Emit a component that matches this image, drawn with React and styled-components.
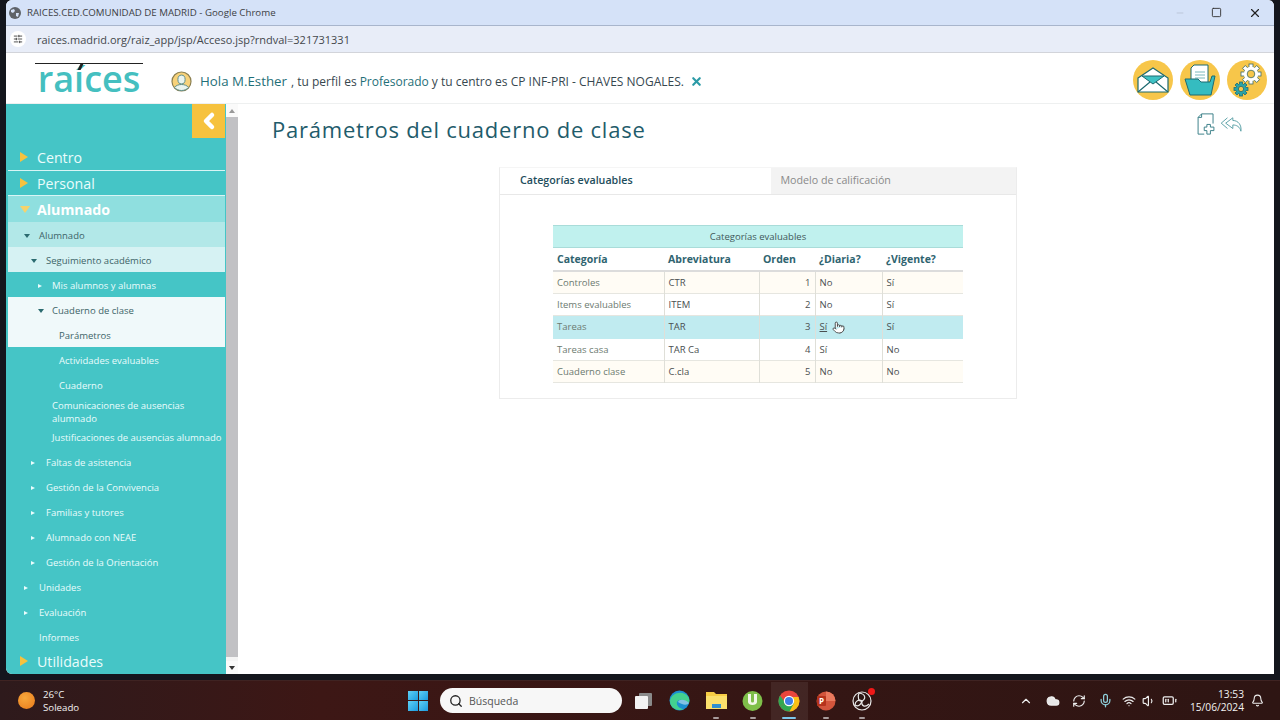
import React from "react";
import styled, { createGlobalStyle } from "styled-components";
import { Minus, Square, X, SlidersHorizontal, ChevronLeft, ChevronUp, Search, Pointer, Mic, Wifi, Volume1, BatteryMedium, Bell, Cloud, RefreshCw } from "lucide-react";

const GlobalStyle = createGlobalStyle`
    html, body {
        margin: 0;
        padding: 0;
        background: #14161d;
        overflow: hidden;
    }
    * { box-sizing: border-box; }
    body { font-family: "Open Sans", "Liberation Sans", sans-serif; }
`;

const Screen = styled.div`
    width: 1280px;
    height: 720px;
    display: flex;
    flex-direction: column;
    background: #14161d;
`;

const Browser = styled.div`
    width: 1268px;
    height: 674px;
    margin: 0 6px;
    display: flex;
    flex-direction: column;
    background: #fff;
    border-radius: 6px 6px 0 6px;
    overflow: hidden;
`;

const TitleBar = styled.div`
    height: 26px;
    flex: none;
    display: flex;
    align-items: center;
    padding: 0 12px 0 3px;
    background: #d5e2f8;
    border-bottom: 1px solid #a8b5cc;
    font-size: 9.7px;
    color: #3c4043;
`;

const Globe = styled.span`
    width: 12px;
    height: 12px;
    margin-right: 6px;
    display: flex;
`;

const WindowButtons = styled.div`
    margin-left: auto;
    display: flex;
    align-items: center;
    gap: 26px;
`;

const AddressBar = styled.div`
    height: 27px;
    flex: none;
    display: flex;
    align-items: center;
    padding-left: 4px;
    background: #e8edf8;
    border-bottom: 1px solid #d2d4da;
    font-size: 11px;
    color: #44484c;
`;

const SiteIcon = styled.span`
    width: 16px;
    height: 16px;
    margin-right: 11px;
    display: flex;
    align-items: center;
    justify-content: center;
    border-radius: 50%;
    background: #fff;
`;

const Header = styled.header`
    height: 51px;
    flex: none;
    display: flex;
    align-items: center;
    padding: 4px 7px 0 29px;
    border-bottom: 1px solid #eef0f0;
`;

const Logo = styled.div`
    position: relative;
    width: 108px;
    height: 32px;
    margin-top: -2px;
    border-top: 1px solid #222;
    color: #45bfc0;
    font-size: 36px;
    font-weight: 600;
    line-height: 30px;
    letter-spacing: 0;
    text-align: center;

    &::after {
        content: "";
        position: absolute;
        left: 44px;
        top: 0;
        width: 3px;
        height: 6px;
        background: #222;
        transform: skewX(-25deg);
    }
`;

const Greeting = styled.div`
    margin-left: 28px;
    padding-top: 2px;
    display: flex;
    align-items: center;
    font-size: 12px;
    color: #37474f;
`;

const GreetName = styled.span`
    margin: 0 4px 0 8px;
    font-size: 13.3px;
    color: #1f6f78;
`;

const ProfileLink = styled.span`
    margin: 0 3px;
    color: #1f6f78;
`;

const HeaderIcons = styled.div`
    margin-left: auto;
    display: flex;
    gap: 7px;
`;

const GoldCircle = styled.span`
    width: 40px;
    height: 40px;
    display: flex;
    align-items: center;
    justify-content: center;
    border-radius: 50%;
    background: #f7c64a;
`;

const Body = styled.div`
    flex: 1;
    min-height: 0;
    display: flex;
`;

const Sidebar = styled.nav`
    width: 220px;
    flex: none;
    padding: 0 1px 0 2px;
    background: #45c5c6;
`;

const CollapseBar = styled.div`
    height: 42px;
    display: flex;
    justify-content: flex-end;
    align-items: flex-start;
`;

const CollapseButton = styled.div`
    width: 33px;
    height: 34px;
    display: flex;
    align-items: center;
    justify-content: center;
    background: #f6c23e;
`;

const tones = {
    base: { bg: "transparent", color: "#eafcfc" },
    alumnado: { bg: "#8fdfdf", color: "#fff" },
    sub1: { bg: "#b2e8e8", color: "#3d6468" },
    sub2: { bg: "#d6f2f3", color: "#3d6468" },
    sub3: { bg: "#f0f9fa", color: "#3d6468" },
};

const MenuRow = styled.div`
    height: ${props => props.$height || 25}px;
    display: flex;
    align-items: center;
    padding-top: 2px;
    padding-left: ${props => props.$indent}px;
    background: ${props => tones[props.$tone || "base"].bg};
    color: ${props => tones[props.$tone || "base"].color};
    font-size: 9.5px;
    line-height: 13px;
`;

const TopRow = styled(MenuRow)`
    padding-top: 0;
    padding-bottom: ${props => props.$lift || 0}px;
    font-size: 14.2px;
    font-weight: ${props => props.$bold ? 700 : 400};
    border-bottom: ${props => props.$line ? "1px solid #d8f5f5" : "none"};
`;

const CaretSlot = styled.span`
    width: ${props => props.$width}px;
    flex: none;
    display: flex;
    align-items: center;
`;

const Caret = styled.span`
    width: 0;
    height: 0;
    ${props => props.$open ? `
        border-left: ${props.$size}px solid transparent;
        border-right: ${props.$size}px solid transparent;
        border-top: ${props.$size * 1.5}px solid ${props.$color};
    ` : `
        border-top: ${props.$size}px solid transparent;
        border-bottom: ${props.$size}px solid transparent;
        border-left: ${props.$size * 1.7}px solid ${props.$color};
    `}
`;

const Scrollbar = styled.div`
    width: 12px;
    flex: none;
    display: flex;
    flex-direction: column;
    background: #f4f4f4;
`;

const ScrollArrow = styled.div`
    height: 13px;
    flex: none;
    display: flex;
    align-items: center;
    justify-content: center;
    background: #fafafa;
`;

const ScrollThumb = styled.div`
    flex: 1;
    margin: 0 0 4px;
    background: #c1c1c4;
`;

const Main = styled.main`
    flex: 1;
    min-width: 0;
    padding: 8px 30px 0 34px;
`;

const TitleRow = styled.div`
    height: 55px;
    display: flex;
    justify-content: space-between;
    align-items: flex-start;
`;

const PageTitle = styled.h1`
    margin: 2px 0 0;
    font-size: 22px;
    line-height: 30px;
    font-weight: 400;
    letter-spacing: 0.77px;
    color: #1f5c6b;
`;

const TitleIcons = styled.div`
    display: flex;
    align-items: center;
    gap: 4px;
    margin-top: 1px;
`;

const Panel = styled.section`
    width: 518px;
    height: 232px;
    margin-left: 227px;
    border: 1px solid #ececec;
    border-top-color: #f5f5f5;
`;

const Tabs = styled.div`
    height: 27px;
    display: flex;
    border-bottom: 1px solid #e8e8e8;
`;

const Tab = styled.div`
    width: ${props => props.$active ? 272 : 245}px;
    padding: 0 0 2px ${props => props.$active ? 20 : 9}px;
    display: flex;
    align-items: center;
    font-size: 10.7px;
    font-weight: ${props => props.$active ? 600 : 400};
    color: ${props => props.$active ? "#1e4d5c" : "#8a8a8a"};
    background: ${props => props.$active ? "#fff" : "#f3f3f3"};
`;

const Table = styled.table`
    width: 410px;
    margin: 30px 0 0 53px;
    border-collapse: collapse;
    table-layout: fixed;
    font-size: 9.5px;
    color: #4a4f50;
`;

const Caption = styled.caption`
    height: 23px;
    line-height: 22px;
    background: #c0f1ee;
    border-top: 1px solid #a9dcd9;
    border-bottom: 1px solid #a9dcd9;
    font-size: 9.5px;
    color: #41585a;
`;

const HeadCell = styled.th`
    height: 23px;
    padding: 0 4px;
    text-align: left;
    font-size: 10.5px;
    font-weight: 700;
    color: #2f6470;
    border-bottom: 2px solid #dcdcdc;
`;

const Row = styled.tr`
    height: 22.4px;
    background: ${props => props.$selected ? "#c0ebf0" : props.$odd ? "#fffcf5" : "#fff"};
    border-bottom: 1px solid ${props => props.$selected ? "#c0ebf0" : "#e6e6e0"};
`;

const Cell = styled.td`
    position: relative;
    padding: 0 4px;
    text-align: ${props => props.$right ? "right" : "left"};
    color: ${props => props.$name ? "#6c7a70" : "#4a4f50"};
    border-left: ${props => props.$first ? "none" : "1px solid #dfdfd8"};
`;

const HandCursor = styled.span`
    position: absolute;
    left: 16px;
    top: 5px;
    display: flex;
`;

const Taskbar = styled.footer`
    height: 40px;
    margin-top: 6px;
    flex: none;
    display: flex;
    align-items: center;
    padding-left: 18px;
    background: linear-gradient(90deg, #2e1a1c 0%, #3d1715 25%, #351614 60%, #2e1513 100%);
    border-top: 1px solid #3f2322;
`;

const Weather = styled.div`
    width: 390px;
    display: flex;
    align-items: center;
    gap: 8px;
    color: #f2f2f2;
    font-size: 9.7px;
    line-height: 13px;
`;

const Sun = styled.span`
    width: 17px;
    height: 17px;
    border-radius: 50%;
    background: radial-gradient(circle at 40% 35%, #f8a83c, #e8791a);
`;

const WinLogo = styled.span`
    width: 20px;
    height: 20px;
    display: grid;
    grid-template-columns: 1fr 1fr;
    gap: 1px;
`;

const WinPane = styled.span`
    background: linear-gradient(135deg, #5fd0f5, #1c9bdf);
`;

const SearchBox = styled.div`
    width: 182px;
    height: 25px;
    margin-left: 12px;
    display: flex;
    align-items: center;
    gap: 6px;
    padding-left: 9px;
    border-radius: 13px;
    background: #f7f7f7;
    color: #555;
    font-size: 10.5px;
`;

const TaskIcons = styled.div`
    margin-left: 3px;
    display: flex;
`;

const TaskIcon = styled.span`
    position: relative;
    width: 36.5px;
    height: 38px;
    display: flex;
    align-items: center;
    justify-content: center;
    background: ${props => props.$active ? "rgba(255,255,255,0.07)" : "transparent"};
`;

const RunningMark = styled.span`
    position: absolute;
    bottom: 1px;
    left: 50%;
    width: ${props => props.$active ? 14 : 6}px;
    height: 2px;
    margin-left: ${props => props.$active ? -7 : -3}px;
    border-radius: 1px;
    background: ${props => props.$active ? "#7cc6ec" : "#a89c9c"};
`;

const RecDot = styled.span`
    position: absolute;
    top: 6px;
    right: 6px;
    width: 7px;
    height: 7px;
    border-radius: 50%;
    background: #f01818;
`;

const Tray = styled.div`
    margin-left: auto;
    display: flex;
    align-items: center;
    padding-right: 16px;
    color: #eee;
`;

const TrayIcon = styled.span`
    width: ${props => props.$width || 26.5}px;
    display: flex;
    justify-content: center;
`;

const Clock = styled.div`
    margin: 0 7px 0 9px;
    text-align: right;
    font-size: 10.2px;
    line-height: 13px;
    color: #f2f2f2;
`;

const MenuLabel = styled.span`
    white-space: ${props => props.$wrap ? "normal" : "nowrap"};
    width: ${props => props.$wrap ? "150px" : "auto"};
`;

const menu = [
    { label: "Alumnado", indent: 16, slot: 15, tone: "sub1", open: true, dark: true },
    { label: "Seguimiento académico", indent: 23, slot: 15, tone: "sub2", open: true, dark: true },
    { label: "Mis alumnos y alumnas", indent: 30, slot: 14, caret: true },
    { label: "Cuaderno de clase", indent: 30, slot: 14, tone: "sub3", open: true, dark: true },
    { label: "Parámetros", indent: 51, tone: "sub3" },
    { label: "Actividades evaluables", indent: 51 },
    { label: "Cuaderno", indent: 51 },
    { label: "Comunicaciones de ausencias alumnado", indent: 44, height: 27, wrap: true },
    { label: "Justificaciones de ausencias alumnado", indent: 44 },
    { label: "Faltas de asistencia", indent: 23, slot: 15, caret: true },
    { label: "Gestión de la Convivencia", indent: 23, slot: 15, caret: true },
    { label: "Familias y tutores", indent: 23, slot: 15, caret: true },
    { label: "Alumnado con NEAE", indent: 23, slot: 15, caret: true },
    { label: "Gestión de la Orientación", indent: 23, slot: 15, caret: true },
    { label: "Unidades", indent: 16, slot: 15, caret: true },
    { label: "Evaluación", indent: 16, slot: 15, caret: true },
    { label: "Informes", indent: 31 },
];

const categories = [
    ["Controles", "CTR", 1, "No", "Sí"],
    ["Items evaluables", "ITEM", 2, "No", "Sí"],
    ["Tareas", "TAR", 3, "Sí", "Sí"],
    ["Tareas casa", "TAR Ca", 4, "Sí", "No"],
    ["Cuaderno clase", "C.cla", 5, "No", "No"],
];

function GlobeIcon() {
    return (
        <svg width="12" height="12" viewBox="0 0 12 12">
            <circle cx="6" cy="6" r="6" fill="#5f6368" />
            <path d="M2 3 L5 2 L6 4 L4 6 L2 5 Z M7 6 L10 6 L9 10 L7 9 Z" fill="#d5e2f8" />
        </svg>
    );
}

function MailIcon() {
    return (
        <svg width="34" height="28" viewBox="0 0 34 28">
            <path d="M2 12 L17 2 L32 12 V26 H2 Z" fill="#fff" stroke="#1d6a70" strokeWidth="1.2" />
            <path d="M6 10 H28 L17 18 Z" fill="#3ec2c4" stroke="#1d6a70" strokeWidth="1" />
            <path d="M2 26 L14 16 M32 26 L20 16" stroke="#1d6a70" strokeWidth="1.2" />
        </svg>
    );
}

function FolderIcon() {
    return (
        <svg width="34" height="34" viewBox="0 0 34 34">
            <path d="M11 2 H25 V24 H8 V5 Z" fill="#fff" stroke="#1d6a70" strokeWidth="1" />
            <path d="M12 9 H22 M12 12 H22 M12 15 H22" stroke="#7ab8bc" strokeWidth="1" />
            <path d="M2 16 H15 L18 19 H27 L29 13 H32 L28 32 H7 Z" fill="#35bcc0" stroke="#1d6a70" strokeWidth="1" />
        </svg>
    );
}

function Gear({ size, fill, color, edge, cx, cy }) {
    const angles = [0, 45, 90, 135];
    return (
        <g>
            {angles.map(a => (
                <rect key={a} x={cx - size * 0.2} y={cy - size} width={size * 0.4} height={size * 2} fill={color} stroke={edge} strokeWidth="0.8" transform={`rotate(${a} ${cx} ${cy})`} />
            ))}
            <circle cx={cx} cy={cy} r={size * 0.72} fill={color} />
            <circle cx={cx} cy={cy} r={size * 0.38} fill={fill} stroke={edge} strokeWidth="0.8" />
        </g>
    );
}

function GearsIcon() {
    return (
        <svg width="36" height="36" viewBox="0 0 36 36">
            <Gear size={10} cx={22} cy={12} color="#fff" edge="#3c6a66" fill="#f7c64a" />
            <Gear size={7} cx={12} cy={27} color="#2aa3a8" edge="#1d6a70" fill="#f7c64a" />
        </svg>
    );
}

function NewDocIcon() {
    return (
        <svg width="18" height="22" viewBox="0 0 20 25" fill="none" stroke="#3a8088" strokeWidth="1.1">
            <path d="M5 1 H18 V12 M8 24 H1 V5 L5 1 V5 H1" />
            <path d="M11 13 H15 V16 H19 V20 H15 V24 H11 V20 H8 V16 H11 Z" />
        </svg>
    );
}

function BackIcon() {
    return (
        <svg width="25" height="17" viewBox="0 0 25 19" fill="none" stroke="#4f9aa0" strokeWidth="1">
            <path d="M8 2 L1 8 L8 14" />
            <path d="M14 2 L6 8 L14 14 V10 C18 10 22 12 23 17 C24 10 20 5 14 5 Z" />
        </svg>
    );
}

function EdgeIcon() {
    return (
        <svg width="21" height="21" viewBox="0 0 21 21">
            <circle cx="10.5" cy="10.5" r="10" fill="#1b8fd0" />
            <path d="M1 11 C2 4 10 1 16 4 C20 6 21 10 20 13 C17 10 10 8 8 12 C7 16 11 19 15 19 C8 22 1 18 1 11 Z" fill="#43d18f" />
            <path d="M9 12 C10 9 16 9 20 13 C19 15 15 15 13 14 C11 13 10 13 9 12 Z" fill="#e7f7f7" opacity="0.5" />
        </svg>
    );
}

function ExplorerIcon() {
    return (
        <svg width="21" height="19" viewBox="0 0 21 19">
            <path d="M0 1 H8 L10 3 H21 V18 H0 Z" fill="#f7cd45" />
            <path d="M0 5 H21 V18 H0 Z" fill="#fbe06c" />
            <rect x="6" y="13" width="9" height="4" fill="#2f8fd0" />
        </svg>
    );
}

function TorrentIcon() {
    return (
        <svg width="21" height="23" viewBox="0 0 21 23">
            <circle cx="10.5" cy="12" r="10" fill="#7fbf4a" />
            <path d="M6 5 V13 C6 17 15 17 15 13 V5 H12 V12 C12 14 9 14 9 12 V5 Z" fill="#f2f7ea" />
        </svg>
    );
}

function ChromeIcon() {
    return (
        <svg width="22" height="22" viewBox="0 0 22 22">
            <circle cx="11" cy="11" r="10.5" fill="#e8453c" />
            <path d="M11 11 L1.9 16.2 A10.5 10.5 0 0 1 2 5.5 L6 11 Z" fill="#31a853" />
            <path d="M1.9 16.2 A10.5 10.5 0 0 0 14 21 L19 11 H11 Z" fill="#31a853" />
            <path d="M21.5 11 A10.5 10.5 0 0 1 11.5 21.5 L16 13 L15 7 H20.5 Z" fill="#fbc116" />
            <circle cx="11" cy="11" r="5.2" fill="#fff" />
            <circle cx="11" cy="11" r="4" fill="#3f7fe8" />
        </svg>
    );
}

function PowerPointIcon() {
    return (
        <svg width="20" height="20" viewBox="0 0 20 20">
            <circle cx="10" cy="10" r="9.5" fill="#d3553c" />
            <path d="M10 .5 A9.5 9.5 0 0 1 19.5 10 H10 Z" fill="#ea7a5e" />
            <rect x="1" y="5" width="9" height="10" rx="1" fill="#b5331c" />
            <text x="3" y="13" fontSize="8" fontWeight="700" fill="#fff" fontFamily="Open Sans">P</text>
        </svg>
    );
}

function ObsIcon() {
    return (
        <svg width="20" height="20" viewBox="0 0 20 20" fill="none" stroke="#e8e8e8" strokeWidth="1.2">
            <circle cx="10" cy="10" r="9" fill="#2c1614" />
            <path d="M7 2 C14 3 14 8 10 10 C7 11 5 7 7 2 Z" />
            <path d="M17 13 C13 17 9 15 10 10" />
            <path d="M3 14 C3 10 7 8 10 10 C9 14 6 16 3 14 Z" />
        </svg>
    );
}

export default function App() {
    return (
        <Screen>
            <GlobalStyle />
            <Browser>
                <TitleBar>
                    <Globe><GlobeIcon /></Globe>
                    RAICES.CED.COMUNIDAD DE MADRID - Google Chrome
                    <WindowButtons>
                        <Minus size={10} color="#b8c2d4" />
                        <Square size={11} color="#333" />
                        <X size={14} color="#222" />
                    </WindowButtons>
                </TitleBar>
                <AddressBar>
                    <SiteIcon><SlidersHorizontal size={10} color="#333" /></SiteIcon>
                    raices.madrid.org/raiz_app/jsp/Acceso.jsp?rndval=321731331
                </AddressBar>
                <Header>
                    <Logo>raíces</Logo>
                    <Greeting>
                        <svg width="21" height="21" viewBox="0 0 21 21">
                            <circle cx="10.5" cy="10.5" r="9.5" fill="#f7d27a" stroke="#8c8052" strokeWidth="1.2" />
                            <ellipse cx="10.5" cy="8.5" rx="3.6" ry="4.4" fill="#eaf4ef" stroke="#5e8f8c" />
                            <path d="M3.5 16.5 C6 12.5 15 12.5 17.5 16.5 C14 20.5 7 20.5 3.5 16.5 Z" fill="#eaf4ef" stroke="#5e8f8c" />
                        </svg>
                        <GreetName>Hola M.Esther</GreetName>
                        , tu perfil es
                        <ProfileLink>Profesorado</ProfileLink>
                        y tu centro es CP INF-PRI - CHAVES NOGALES.
                        <X size={13} strokeWidth={4} color="#2b9aa6" style={{ marginLeft: 6 }} />
                    </Greeting>
                    <HeaderIcons>
                        <GoldCircle><MailIcon /></GoldCircle>
                        <GoldCircle><FolderIcon /></GoldCircle>
                        <GoldCircle><GearsIcon /></GoldCircle>
                    </HeaderIcons>
                </Header>
                <Body>
                    <Sidebar>
                        <CollapseBar>
                            <CollapseButton><ChevronLeft size={24} strokeWidth={4.5} color="#fff" /></CollapseButton>
                        </CollapseBar>
                        <TopRow $indent={12} $line $lift={2}>
                            <CaretSlot $width={17}><Caret $size={5} $color="#f6c23e" /></CaretSlot>Centro
                        </TopRow>
                        <TopRow $indent={12} $line>
                            <CaretSlot $width={17}><Caret $size={5} $color="#f6c23e" /></CaretSlot>Personal
                        </TopRow>
                        <TopRow $indent={12} $tone="alumnado" $bold $height={26}>
                            <CaretSlot $width={17}><Caret $open $size={5} $color="#f6d36c" /></CaretSlot>Alumnado
                        </TopRow>
                        {menu.map(item => (
                            <MenuRow key={item.label} $indent={item.indent} $tone={item.tone} $height={item.height}>
                                {item.slot && (
                                    <CaretSlot $width={item.slot}>
                                        <Caret $open={item.open} $size={item.open ? 3 : 2.5} $color={item.dark ? "#2b6b70" : "#eafcfc"} />
                                    </CaretSlot>
                                )}
                                <MenuLabel $wrap={item.wrap}>{item.label}</MenuLabel>
                            </MenuRow>
                        ))}
                        <TopRow $indent={12} $height={24}>
                            <CaretSlot $width={17}><Caret $size={5} $color="#f6c23e" /></CaretSlot>Utilidades
                        </TopRow>
                    </Sidebar>
                    <Scrollbar>
                        <ScrollArrow><Caret $open $size={3} $color="#999" style={{ transform: "rotate(180deg)" }} /></ScrollArrow>
                        <ScrollThumb />
                        <ScrollArrow><Caret $open $size={3} $color="#333" /></ScrollArrow>
                    </Scrollbar>
                    <Main>
                        <TitleRow>
                            <PageTitle>Parámetros del cuaderno de clase</PageTitle>
                            <TitleIcons>
                                <NewDocIcon />
                                <BackIcon />
                            </TitleIcons>
                        </TitleRow>
                        <Panel>
                            <Tabs>
                                <Tab $active>Categorías evaluables</Tab>
                                <Tab>Modelo de calificación</Tab>
                            </Tabs>
                            <Table>
                                <Caption>Categorías evaluables</Caption>
                                <colgroup>
                                    <col width="111" />
                                    <col width="95" />
                                    <col width="56" />
                                    <col width="67" />
                                    <col width="81" />
                                </colgroup>
                                <thead>
                                    <tr>
                                        <HeadCell>Categoría</HeadCell>
                                        <HeadCell>Abreviatura</HeadCell>
                                        <HeadCell>Orden</HeadCell>
                                        <HeadCell>¿Diaria?</HeadCell>
                                        <HeadCell>¿Vigente?</HeadCell>
                                    </tr>
                                </thead>
                                <tbody>
                                    {categories.map((cat, i) => (
                                        <Row key={cat[0]} $odd={i % 2 === 0} $selected={i === 2}>
                                            <Cell $first $name>{cat[0]}</Cell>
                                            <Cell>{cat[1]}</Cell>
                                            <Cell $right>{cat[2]}</Cell>
                                            <Cell>
                                                {i === 2 ? <u>{cat[3]}</u> : cat[3]}
                                                {i === 2 && (
                                                    <HandCursor><Pointer size={13} color="#222" fill="#fff" strokeWidth={1.4} /></HandCursor>
                                                )}
                                            </Cell>
                                            <Cell>{cat[4]}</Cell>
                                        </Row>
                                    ))}
                                </tbody>
                            </Table>
                        </Panel>
                    </Main>
                </Body>
            </Browser>
            <Taskbar>
                <Weather>
                    <Sun />
                    <div>26°C<br />Soleado</div>
                </Weather>
                <WinLogo>
                    <WinPane /><WinPane /><WinPane /><WinPane />
                </WinLogo>
                <SearchBox>
                    <Search size={14} color="#222" strokeWidth={2.2} />
                    Búsqueda
                </SearchBox>
                <TaskIcons>
                    <TaskIcon>
                        <svg width="20" height="18" viewBox="0 0 20 18">
                            <rect x="6" y="1" width="13" height="13" rx="1" fill="#8a8a8a" />
                            <rect x="2" y="4" width="13" height="13" rx="1" fill="#f2f2f2" />
                        </svg>
                    </TaskIcon>
                    <TaskIcon><EdgeIcon /></TaskIcon>
                    <TaskIcon><ExplorerIcon /><RunningMark /></TaskIcon>
                    <TaskIcon><TorrentIcon /><RunningMark /></TaskIcon>
                    <TaskIcon $active><ChromeIcon /><RunningMark $active /></TaskIcon>
                    <TaskIcon><PowerPointIcon /><RunningMark /></TaskIcon>
                    <TaskIcon><ObsIcon /><RecDot /><RunningMark /></TaskIcon>
                </TaskIcons>
                <Tray>
                    <TrayIcon><ChevronUp size={14} /></TrayIcon>
                    <TrayIcon><Cloud size={14} fill="#e6e6e6" /></TrayIcon>
                    <TrayIcon><RefreshCw size={14} /></TrayIcon>
                    <TrayIcon><Mic size={15} color="#8fd0dc" /></TrayIcon>
                    <TrayIcon $width={20}><Wifi size={14} /></TrayIcon>
                    <TrayIcon $width={20}><Volume1 size={14} /></TrayIcon>
                    <TrayIcon $width={22}><BatteryMedium size={15} /></TrayIcon>
                    <Clock>13:53<br />15/06/2024</Clock>
                    <Bell size={13} />
                </Tray>
            </Taskbar>
        </Screen>
    );
}
